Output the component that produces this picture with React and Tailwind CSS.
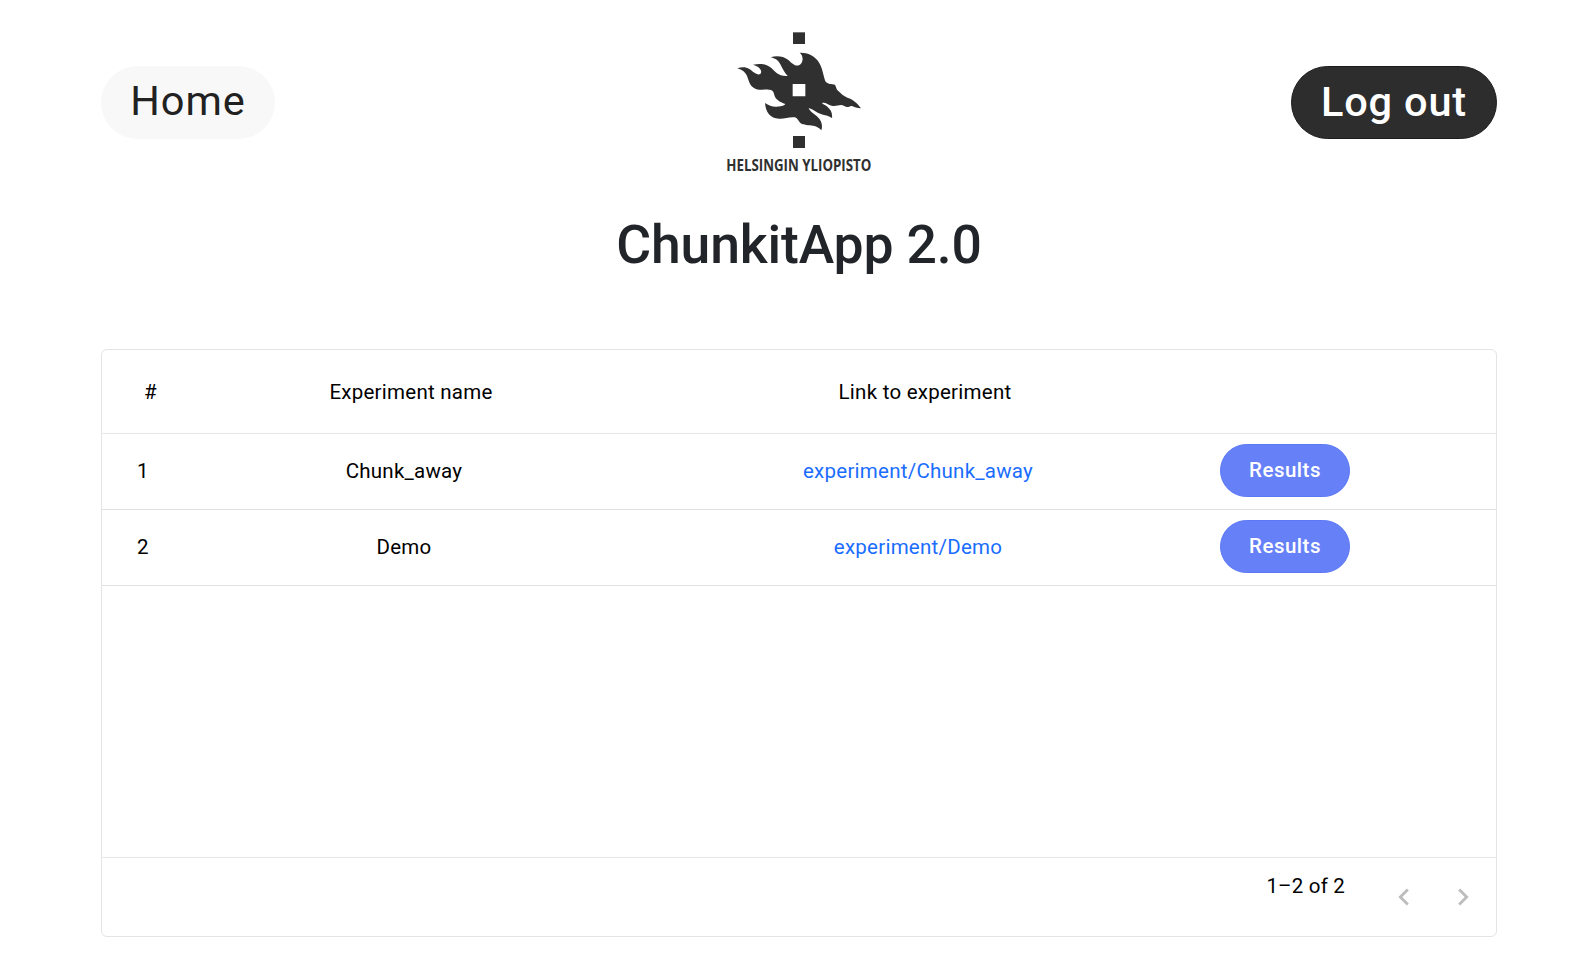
const rows = [
  { id: 1, name: 'Chunk_away', link: 'experiment/Chunk_away' },
  { id: 2, name: 'Demo', link: 'experiment/Demo' },
];

function Logo() {
  return (
    <svg viewBox="0 0 480 480" className="ml-[2px] h-[160px] w-[160px] overflow-visible text-[#303030]" fill="currentColor">
      <rect x="219" y="37" width="36" height="35" />
      <rect x="219" y="348" width="36" height="36" />
      <path
        fillRule="evenodd"
        d="M52 145C66 140 78 141 88 147C99 154 108 165 119 163C128 158 125 141 99 134C124 129 142 133 155 145C165 154 175 170 203 168C193 158 187 144 181 133C175 122 168 116 152 112C170 106 190 109 204 119C216 129 225 140 237 136C250 130 252 108 239 98C262 97 283 107 294 123C308 143 309 164 316 184C323 194 335 192 345 194L351 209C362 220 372 229 384 234C397 238 410 247 423 265C411 264 403 261 396 258C389 256 386 266 373 258C359 250 350 262 335 257C324 254 315 245 306 249C309 254 316 255 322 260C332 268 338 279 336 294C326 287 318 286 309 284C291 280 283 269 266 264C270 276 283 281 293 291C304 301 309 315 304 331C294 320 283 317 269 316C255 315 247 315 239 307C234 300 231 292 222 292C205 291 193 297 177 296C151 295 137 277 135 249C146 256 158 261 170 260C180 259 192 258 196 252C179 246 166 238 163 225C161 214 157 209 146 209C129 208 116 213 102 204C87 196 86 178 80 166C75 156 67 149 52 145ZM218 192V229H256V192Z"
      />
      <text
        x="19"
        y="453"
        textLength="435"
        lengthAdjust="spacingAndGlyphs"
        className="font-['Open_Sans',sans-serif] text-[46px] font-bold"
      >
        HELSINGIN YLIOPISTO
      </text>
    </svg>
  );
}

function Chevron({ d }) {
  return (
    <svg viewBox="0 0 24 24" className="h-[34px] w-[34px]" fill="#bdbdbd">
      <path d={d} />
    </svg>
  );
}

export default function App() {
  return (
    <div className="h-[972px] w-[1579px] bg-white pl-[101px] font-[Roboto,sans-serif] text-black">
      <div className="w-[1396px]">
        <header className="flex h-[180px] items-start justify-between pt-5">
          <div className="flex flex-1 pt-[46px]">
            <button className="h-[73px] w-[174px] rounded-full bg-[#f8f8f8] pb-[3px] text-[41.5px] leading-[70px] tracking-[0.9px] text-[#212121]">
              Home
            </button>
          </div>
          <Logo />
          <div className="flex flex-1 justify-end pt-[46px]">
            <button className="h-[73px] w-[206px] rounded-full border border-[#1b1c1d] bg-[#2d2d2d] pb-[2px] text-[41.5px] font-medium leading-[68px] tracking-[0.8px] text-white">
              Log out
            </button>
          </div>
        </header>
        <h1 className="mt-[33px] text-center text-[53.5px] font-medium leading-[64px] tracking-[-0.15px] text-[#212529]">
          ChunkitApp 2.0
        </h1>
        <section className="mt-[72px] h-[588px] rounded-md border border-[#e4e4e4] text-[20.5px] leading-6 tracking-[0.25px]">
          <div className="flex h-[84px] items-center border-b border-[#e6e6e6]">
            <div className="w-[97px] text-center">#</div>
            <div className="w-[424px] text-center">Experiment name</div>
            <div className="w-[604px] text-center">Link to experiment</div>
          </div>
          {rows.map((row) => (
            <div key={row.id} className="flex h-[76px] items-center border-b border-[#e0e0e0] pb-[2px]">
              <div className="w-[82px] text-center">{row.id}</div>
              <div className="w-[440px] text-center">{row.name}</div>
              <a className="w-[588px] text-center text-[#1a6dff]">{row.link}</a>
              <button className="ml-[8px] h-[53px] w-[130px] rounded-full border border-[#5c78f5] bg-[#6681f7] pb-px font-medium tracking-[0.5px] text-white">
                Results
              </button>
            </div>
          ))}
          <div className="h-[272px] border-b border-[#e6e6e6]" />
          <footer className="flex justify-end pr-4">
            <span className="mr-[42px] mt-[16px] tracking-[0.2px]">1–2 of 2</span>
            <span className="mr-[25px] mt-[22px]">
              <Chevron d="M15.41 7.41 14 6l-6 6 6 6 1.41-1.41L10.83 12z" />
            </span>
            <span className="mt-[22px]">
              <Chevron d="M10 6 8.59 7.41 13.17 12l-4.58 4.59L10 18l6-6z" />
            </span>
          </footer>
        </section>
      </div>
    </div>
  );
}
